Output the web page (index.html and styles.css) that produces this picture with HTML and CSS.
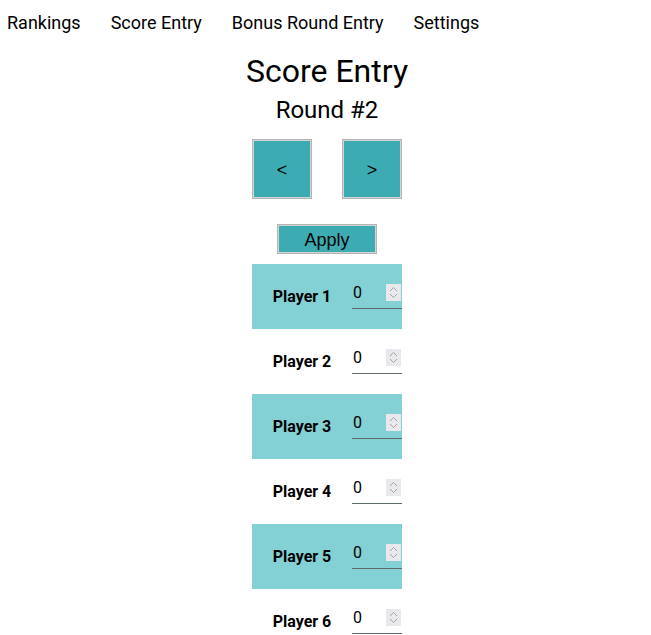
FILE: index.html
```html
<!DOCTYPE html>
<html>
<head>
<meta charset="utf-8">
<link rel="stylesheet" href="styles.css">
</head>
<body>
<nav class="nav">
  <a class="nav-link">Rankings</a>
  <a class="nav-link">Score Entry</a>
  <a class="nav-link">Bonus Round Entry</a>
  <a class="nav-link">Settings</a>
</nav>
<main class="main">
  <h1 class="title">Score Entry</h1>
  <h2 class="subtitle">Round #2</h2>
  <div class="pager">
    <button class="btn btn-nav">&lt;</button>
    <button class="btn btn-nav">&gt;</button>
  </div>
  <button class="btn btn-apply">Apply</button>
  <div class="players">
    <div class="row row-alt"><span class="name">Player 1</span><span class="num"><span class="val">0</span><span class="spin"><svg width="15" height="17" viewBox="0 0 15 17"><path d="M4 7 L7.5 3.5 L11 7 M4 10 L7.5 13.5 L11 10" fill="none" stroke="#a3a3a8" stroke-width="1"/></svg></span></span></div>
    <div class="row"><span class="name">Player 2</span><span class="num"><span class="val">0</span><span class="spin"><svg width="15" height="17" viewBox="0 0 15 17"><path d="M4 7 L7.5 3.5 L11 7 M4 10 L7.5 13.5 L11 10" fill="none" stroke="#a3a3a8" stroke-width="1"/></svg></span></span></div>
    <div class="row row-alt"><span class="name">Player 3</span><span class="num"><span class="val">0</span><span class="spin"><svg width="15" height="17" viewBox="0 0 15 17"><path d="M4 7 L7.5 3.5 L11 7 M4 10 L7.5 13.5 L11 10" fill="none" stroke="#a3a3a8" stroke-width="1"/></svg></span></span></div>
    <div class="row"><span class="name">Player 4</span><span class="num"><span class="val">0</span><span class="spin"><svg width="15" height="17" viewBox="0 0 15 17"><path d="M4 7 L7.5 3.5 L11 7 M4 10 L7.5 13.5 L11 10" fill="none" stroke="#a3a3a8" stroke-width="1"/></svg></span></span></div>
    <div class="row row-alt"><span class="name">Player 5</span><span class="num"><span class="val">0</span><span class="spin"><svg width="15" height="17" viewBox="0 0 15 17"><path d="M4 7 L7.5 3.5 L11 7 M4 10 L7.5 13.5 L11 10" fill="none" stroke="#a3a3a8" stroke-width="1"/></svg></span></span></div>
    <div class="row"><span class="name">Player 6</span><span class="num"><span class="val">0</span><span class="spin"><svg width="15" height="17" viewBox="0 0 15 17"><path d="M4 7 L7.5 3.5 L11 7 M4 10 L7.5 13.5 L11 10" fill="none" stroke="#a3a3a8" stroke-width="1"/></svg></span></span></div>
  </div>
</main>
</body>
</html>
```

FILE: styles.css
```css
body {
  margin: 8px;
  font-family: Roboto, "Liberation Sans", sans-serif;
  color: #000;
  background: #fff;
}

.nav {
  display: flex;
  gap: 30px;
  height: 29px;
  align-items: center;
  margin-left: -1px;
}

.nav-link {
  font-size: 18px;
  line-height: 21px;
  color: #000;
}

.main {
  display: flex;
  flex-direction: column;
  align-items: center;
  padding-left: 3px;
}

.title {
  font-size: 32px;
  font-weight: 400;
  line-height: 38px;
  margin: 15px 0 0;
}

.subtitle {
  font-size: 24px;
  font-weight: 400;
  line-height: 28px;
  margin: 6px 0 0;
}

.pager {
  display: flex;
  gap: 30px;
  margin-top: 15px;
}

.btn {
  background: #3cacb2;
  border: 1px solid #b4b4b4;
  box-shadow: inset 0 0 0 1px #d4d4d4;
  font-family: "Liberation Sans", Arial, sans-serif;
  color: #000;
  padding: 0;
}

.btn-nav {
  width: 60px;
  height: 60px;
  font-size: 18px;
  padding-top: 2px;
}

.btn-apply {
  width: 100px;
  height: 30px;
  font-size: 18px;
  margin-top: 25px;
  padding-top: 2px;
}

.players {
  display: flex;
  flex-direction: column;
  margin-top: 10px;
  width: 150px;
}

.row {
  display: flex;
  align-items: center;
  height: 65px;
}

.row-alt {
  background: #83d1d4;
}

.name {
  width: 100px;
  text-align: center;
  font-weight: 700;
  font-size: 16px;
}

.num {
  display: flex;
  align-items: flex-start;
  justify-content: space-between;
  width: 50px;
  height: 24px;
  border-bottom: 1px solid #5f6a6a;
}

.val {
  font-size: 16px;
  line-height: 18px;
  padding-left: 1px;
}

.spin {
  display: flex;
  background: #e9e9ed;
  width: 15px;
  height: 17px;
  margin-right: 1px;
}
```
